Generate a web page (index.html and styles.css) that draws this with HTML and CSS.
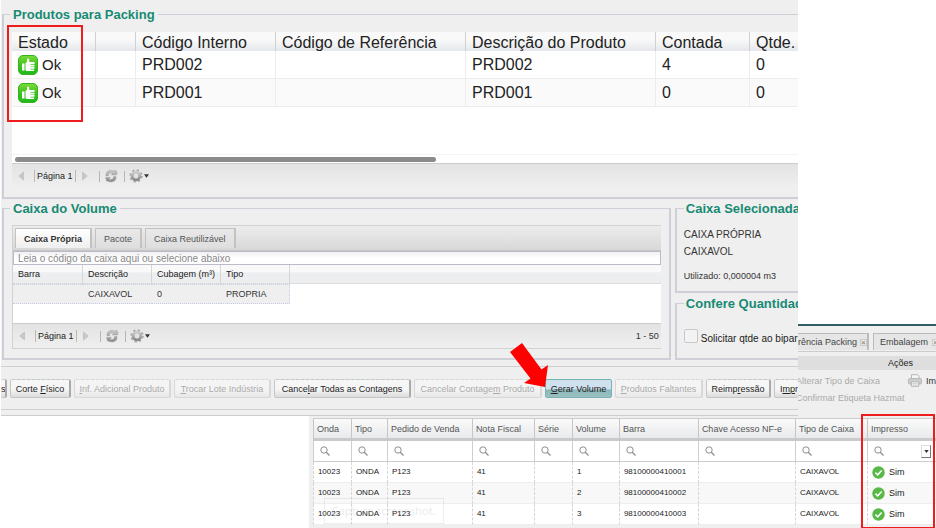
FILE: index.html
```html
<!DOCTYPE html>
<html lang="pt-BR">
<head>
<meta charset="utf-8">
<title>Packing</title>
<link rel="stylesheet" href="styles.css">
</head>
<body>
<svg class="defs" aria-hidden="true">
  <defs>
    <linearGradient id="okfill" x1="0" y1="0" x2="0" y2="1"><stop offset="0" stop-color="#7bdc3a"/><stop offset=".45" stop-color="#45c41f"/><stop offset="1" stop-color="#1fb81c"/></linearGradient>
    <linearGradient id="metal" x1="0" y1="0" x2="0" y2="1"><stop offset="0" stop-color="#cccccc"/><stop offset="1" stop-color="#8a8a8a"/></linearGradient>
  </defs>
  <symbol id="thumb" viewBox="0 0 20 20">
    <rect x=".5" y=".5" width="19" height="19" rx="4.5" fill="url(#okfill)" stroke="#35b51d"/>
    <path d="M4 8.500h2.500V15.500H4zM7.500 8.300L9 6.800V3.800h2.200V7h5.300v2h-4v.700h4v1.700h-4v.700h4v1.600h-4v.700h3.600v1.600H8.800l-1.300-.800z" fill="#fff"/>
  </symbol>
  <symbol id="refresh" viewBox="0 0 14 14">
    <path d="M2 7C1.300 3.500 4 1 7.500 1.400L11 2.200V.800l2.200 2.400L12.500 6H7.200l1.600-1.700C6 3.600 4.200 4.500 4.500 7zM12 7.500c.700 3.500-2 5.700-5.500 5.400L2.500 12l-1-3.500h5L5 10.200c2.700.700 4.600 0 4.500-2.700z" fill="url(#metal)" stroke="#999" stroke-width=".4"/>
  </symbol>
  <symbol id="gear" viewBox="0 0 14 14">
    <circle cx="7" cy="7" r="5.600" fill="none" stroke="#ababab" stroke-width="2.200" stroke-dasharray="2.200 2.200"/>
    <circle cx="7" cy="7" r="3.800" fill="none" stroke="url(#metal)" stroke-width="2.800"/>
    <circle cx="7" cy="7" r="2.200" fill="#e2e2e2"/>
  </symbol>
  <symbol id="prev" viewBox="0 0 6 10"><path d="M5.500 1v8L.8 5z" fill="#c9c9c9" stroke="#b5b5b5" stroke-width=".6"/></symbol>
  <symbol id="next" viewBox="0 0 6 10"><path d="M.5 1v8l4.700-4z" fill="#c9c9c9" stroke="#b5b5b5" stroke-width=".6"/></symbol>
  <symbol id="down" viewBox="0 0 6 4"><path d="M0 0h6L3 4z" fill="#333"/></symbol>
  <symbol id="search" viewBox="0 0 10 10"><circle cx="4" cy="4" r="3.200" fill="none" stroke="#8f8f8f"/><path d="M6.300 6.300l3.200 3.200" stroke="#8f8f8f" stroke-width="1.300"/></symbol>
  <symbol id="check" viewBox="0 0 14 14"><circle cx="7" cy="7" r="6.700" fill="#58b947"/><path d="M3.700 7.200l2.400 2.300 4.300-4.700" fill="none" stroke="#fff" stroke-width="1.700"/></symbol>
  <symbol id="printer" viewBox="0 0 14 13">
    <path d="M3.500 5V.7h6l1.500 1.500V5" fill="#f4f4f4" stroke="#b5b5b5"/><rect x=".6" y="4.600" width="12.800" height="5.400" rx="1" fill="#cecece" stroke="#b5b5b5"/><path d="M3.300 7.800h7.400v4.500H3.300z" fill="#f4f4f4" stroke="#b5b5b5"/><path d="M4.500 9.500h5M4.500 11h5" stroke="#c4c4c4" stroke-width=".7"/>
  </symbol>
</svg>

<main class="page">
  <div class="upper">
    <section class="packing">
      <fieldset class="group products">
        <legend>Produtos para Packing</legend>
        <div class="grid-box">
          <table class="product-table">
            <colgroup><col class="w84"><col class="w40"><col class="w140"><col class="w190"><col class="w190"><col class="w94"><col></colgroup>
            <thead><tr><th>Estado</th><th></th><th>Código Interno</th><th>Código de Referência</th><th>Descrição do Produto</th><th>Contada</th><th>Qtde.</th></tr></thead>
            <tbody>
              <tr><td><span class="state"><svg><use href="#thumb"/></svg>Ok</span></td><td></td><td>PRD002</td><td></td><td>PRD002</td><td>4</td><td>0</td></tr>
              <tr><td><span class="state"><svg><use href="#thumb"/></svg>Ok</span></td><td></td><td>PRD001</td><td></td><td>PRD001</td><td>0</td><td>0</td></tr>
            </tbody>
          </table>
          <div class="scroll"><div class="scroll-thumb"></div></div>
        </div>
        <div class="pager">
          <button class="icon-btn" aria-label="Anterior"><svg class="arrow"><use href="#prev"/></svg></button>
          <span class="page-no">Página 1</span>
          <button class="icon-btn" aria-label="Próxima"><svg class="arrow"><use href="#next"/></svg></button>
          <i class="sep"></i>
          <button class="icon-btn" aria-label="Atualizar"><svg class="tool"><use href="#refresh"/></svg></button>
          <i class="sep near"></i>
          <button class="icon-btn" aria-label="Opções"><svg class="tool"><use href="#gear"/></svg><svg class="caret"><use href="#down"/></svg></button>
        </div>
        <div class="mark mark-state"></div>
      </fieldset>

      <div class="columns">
        <fieldset class="group volume">
          <legend>Caixa do Volume</legend>
          <div class="box-panel">
            <div class="tabs">
              <button class="tab active">Caixa Própria</button>
              <button class="tab">Pacote</button>
              <button class="tab">Caixa Reutilizável</button>
            </div>
            <input class="code" type="text" aria-label="Código da caixa" placeholder="Leia o código da caixa aqui ou selecione abaixo">
            <div class="box-grid">
              <table class="box-table">
                <colgroup><col class="w70"><col class="w69"><col class="w69"><col class="w69"><col></colgroup>
                <thead><tr><th>Barra</th><th>Descrição</th><th>Cubagem (m³)</th><th>Tipo</th><th></th></tr></thead>
                <tbody><tr><td></td><td>CAIXAVOL</td><td>0</td><td>PROPRIA</td><td></td></tr></tbody>
              </table>
            </div>
            <div class="pager">
              <button class="icon-btn" aria-label="Anterior"><svg class="arrow"><use href="#prev"/></svg></button>
              <span class="page-no">Página 1</span>
              <button class="icon-btn" aria-label="Próxima"><svg class="arrow"><use href="#next"/></svg></button>
              <i class="sep"></i>
              <button class="icon-btn" aria-label="Atualizar"><svg class="tool"><use href="#refresh"/></svg></button>
              <i class="sep near"></i>
              <button class="icon-btn" aria-label="Opções"><svg class="tool"><use href="#gear"/></svg><svg class="caret"><use href="#down"/></svg></button>
              <span class="range">1 - 50</span>
            </div>
          </div>
        </fieldset>
        <div class="side">
          <fieldset class="group selected">
            <legend>Caixa Selecionada</legend>
            <p class="name">CAIXA PRÓPRIA</p>
            <p class="name">CAIXAVOL</p>
            <p class="used">Utilizado: 0,000004 m3</p>
          </fieldset>
          <fieldset class="group confirm">
            <legend>Confere Quantidad</legend>
            <label class="ask"><input type="checkbox"><span>Solicitar qtde ao bipar</span></label>
          </fieldset>
        </div>
      </div>

      <div class="actions">
        <button class="btn first">s</button>
        <button class="btn">Corte <u>F</u>ísico</button>
        <button class="btn" disabled><u>I</u>nf. Adicional Produto</button>
        <button class="btn" disabled><u>T</u>rocar Lote Indústria</button>
        <button class="btn">Cance<u>l</u>ar Todas as Contagens</button>
        <button class="btn" disabled>Cancelar Contage<u>m</u> Produto</button>
        <button class="btn primary"><u>G</u>erar Volume</button>
        <button class="btn" disabled><u>P</u>rodutos Faltantes</button>
        <button class="btn">Reimp<u>r</u>essão</button>
        <button class="btn last">I<u>mp</u>r</button>
        <svg class="pointer" viewBox="0 0 40 46" aria-hidden="true"><path d="M1 10L13 1l19.500 26.500L39 23l-3 22-21-4 6.500-4.500z" fill="#fe0000"/></svg>
      </div>
    </section>

    <section class="window">
      <div class="win-tabs">
        <button class="win-tab cut">rência Packing<span class="close">×</span></button>
        <button class="win-tab">Embalagem<span class="close">×</span></button>
      </div>
      <h2>Ações</h2>
      <div class="commands">
        <button class="cmd" disabled>Alterar Tipo de Caixa</button>
        <button class="cmd print"><svg><use href="#printer"/></svg>Im</button>
        <button class="cmd" disabled>Confirmar Etiqueta Hazmat</button>
      </div>
    </section>
  </div>

  <section class="volumes">
    <table class="volume-table">
      <colgroup><col class="c38"><col class="c36"><col class="c85"><col class="c62"><col class="c38"><col class="c47"><col class="c79"><col class="c97"><col class="c72"><col></colgroup>
      <thead>
        <tr><th>Onda</th><th>Tipo</th><th>Pedido de Venda</th><th>Nota Fiscal</th><th>Série</th><th>Volume</th><th>Barra</th><th>Chave Acesso NF-e</th><th>Tipo de Caixa</th><th>Impresso</th></tr>
        <tr class="filters">
          <td><label><svg><use href="#search"/></svg><input aria-label="Filtrar Onda"></label></td>
          <td><label><svg><use href="#search"/></svg><input aria-label="Filtrar Tipo"></label></td>
          <td><label><svg><use href="#search"/></svg><input aria-label="Filtrar Pedido de Venda"></label></td>
          <td><label><svg><use href="#search"/></svg><input aria-label="Filtrar Nota Fiscal"></label></td>
          <td><label><svg><use href="#search"/></svg><input aria-label="Filtrar Série"></label></td>
          <td><label><svg><use href="#search"/></svg><input aria-label="Filtrar Volume"></label></td>
          <td><label><svg><use href="#search"/></svg><input aria-label="Filtrar Barra"></label></td>
          <td><label><svg><use href="#search"/></svg><input aria-label="Filtrar Chave Acesso NF-e"></label></td>
          <td><label><svg><use href="#search"/></svg><input aria-label="Filtrar Tipo de Caixa"></label></td>
          <td><label><svg><use href="#search"/></svg><select aria-label="Filtrar Impresso"><option></option></select><span class="drop"><svg><use href="#down"/></svg></span></label></td>
        </tr>
      </thead>
      <tbody>
        <tr><td>10023</td><td>ONDA</td><td>P123</td><td>41</td><td></td><td>1</td><td>98100000410001</td><td></td><td>CAIXAVOL</td><td><span class="done"><svg><use href="#check"/></svg>Sim</span></td></tr>
        <tr><td>10023</td><td>ONDA</td><td>P123</td><td>41</td><td></td><td>2</td><td>98100000410002</td><td></td><td>CAIXAVOL</td><td><span class="done"><svg><use href="#check"/></svg>Sim</span></td></tr>
        <tr><td>10023</td><td>ONDA</td><td>P123</td><td>41</td><td></td><td>3</td><td>98100000410003</td><td></td><td>CAIXAVOL</td><td><span class="done"><svg><use href="#check"/></svg>Sim</span></td></tr>
      </tbody>
    </table>
    <div class="tip">Capture screenshot.</div>
    <div class="mark mark-printed"></div>
  </section>
</main>
</body>
</html>
```
FILE: styles.css
```css
* { box-sizing: border-box; }
body { margin: 0; background: #fff; color: #333; font: 9px/12px "Liberation Sans", Arial, sans-serif; overflow: hidden; }
button, input, select { font: inherit; color: inherit; margin: 0; padding: 0; }
button { border: 0; background: none; white-space: nowrap; }
table { border-collapse: separate; border-spacing: 0; table-layout: fixed; width: 100%; }
th, td { padding: 0 0 0 5px; text-align: left; font-weight: normal; white-space: nowrap; overflow: hidden; }
p, h2 { margin: 0; }
.defs { position: absolute; width: 0; height: 0; }

.upper { display: grid; grid-template-columns: minmax(0, 1fr) 138px; align-items: end; }
.packing { margin-left: 1px; padding: 7px 0 0 1px; background: #efefef; border-bottom: 1px solid #ccc; overflow: hidden; }

.group { position: relative; min-width: 0; margin: 0; padding: 10px 9px 10px; border: 2px solid #cfcfd8; border-top-width: 1px; }
.group legend { margin-left: -2px; padding: 0 3px; color: #178a74; font-size: 13px; line-height: 15px; font-weight: bold; white-space: nowrap; }
.products { padding: 10px 0 9px 8px; border-right: 0; }

.grid-box { background: #fff; border-bottom: 1px solid #ccc; }
.w84 { width: 84px; } .w40 { width: 40px; } .w140 { width: 140px; } .w190 { width: 190px; } .w94 { width: 94px; }
.w70 { width: 70px; } .w69 { width: 69px; }
.product-table { font-size: 16px; line-height: 20px; color: #222; }
.product-table th { height: 19px; padding-top: 3px; line-height: 16px; border-right: 1px solid #d0d0d0; background: linear-gradient(#f9f9f9 40%, #e4e7ea); }
.product-table td { height: 28px; border-right: 1px solid #ededed; border-bottom: 1px solid #ededed; }
.product-table th, .product-table td { padding-left: 6px; }
.product-table tr:nth-child(2) td { background: #fafafa; }
.product-table th:last-child, .product-table td:last-child { border-right: 0; }
.state { display: flex; align-items: center; gap: 4px; font-size: 15px; }
.state svg { width: 20px; height: 20px; }
.scroll { margin-top: 47px; height: 9px; padding: 3px; border-top: 1px solid #f4f4f4; }
.scroll-thumb { width: 54%; height: 5px; border-radius: 3px; background: #8b8b8b; margin-top: -1px; }

.pager { display: flex; align-items: center; height: 24px; padding: 0 2px 0 6px; background: linear-gradient(#e3e3e3, #efefef); }
.icon-btn { display: flex; align-items: center; gap: 1px; }
.arrow { width: 6px; height: 10px; }
.tool { width: 14px; height: 14px; }
.caret { width: 5px; height: 4px; }
.page-no { margin: 0 6px 0 10px; padding: 0 2px; border: solid #bdb9ae; border-width: 0 1px; color: #222; }
.sep { width: 1px; height: 11px; margin: 0 4px 0 11px; background: #b5b5b5; }
.sep.near { margin-left: 6px; }
.range { margin-left: auto; }

.columns { display: grid; grid-template-columns: minmax(0, 668fr) minmax(0, 123fr); gap: 4px; margin-top: 2px; }
.volume { padding: 9px 8px; }
.box-panel { border: 1px solid #d2d2d2; border-right: 0; }
.tabs { display: flex; align-items: flex-end; gap: 3px; height: 25px; padding: 0 2px 2px; background: linear-gradient(#ececec, #d8d8d8); border-bottom: 1px solid #c4c4c4; }
.tab { height: 20px; padding: 0 8px; border: 1px solid #c2c2c2; border-width: 1px 2px 0 1px; background: linear-gradient(#e9e9e9, #dedede); color: #555; }
.tab.active { background: linear-gradient(#fff, #efefef); color: #333; font-weight: bold; }
.code { display: block; width: 100%; height: 14px; padding: 0 4px; border: 1px solid #bcbcc9; background: linear-gradient(#f0f0f0, #fff 50%); font-size: 10px; }
.code::placeholder { color: #888; opacity: 1; }
.box-grid { height: 59px; background: #fff; border-bottom: 1px solid #ccc; }
.box-table th { height: 19px; border-right: 1px solid #d6d6d6; border-bottom: 1px solid #ddd; background: linear-gradient(#f9f9f9 35%, #eceef0 45%, #eceef0); color: #222; }
.box-table th:last-child { border-right: 0; }
.box-table td { height: 20px; border: dotted #c3cce4; border-width: 1px 0; background: #efefef; }
.box-table td:nth-child(4) { border-right-width: 1px; }
.box-table td:last-child { border: 0; background: #fff; }

.side { display: grid; grid-template-rows: 92px 1fr; gap: 3px; min-width: 0; }
.side .group { border-right: 0; padding: 10px 0 0 7px; }
.side legend { margin-left: 0; padding-left: 2px; }
.name { line-height: 17px; font-size: 10px; }
.used { margin-top: 10px; white-space: nowrap; }
.side .confirm { padding-top: 18px; }
.ask { display: flex; gap: 3px; white-space: nowrap; font-size: 10px; line-height: 19px; color: #222; }
.ask input { appearance: none; flex: none; width: 14px; height: 14px; border: 1px solid #c8c8c8; border-radius: 2px; background: #f3f3f3; }

.actions { position: relative; display: grid; grid-template-columns: 6px minmax(0, 61fr) minmax(0, 97fr) minmax(0, 97fr) minmax(0, 137fr) minmax(0, 128fr) minmax(0, 67fr) minmax(0, 88fr) minmax(0, 65fr) minmax(0, 24fr); gap: 3px; margin: 6px 0 5px -1px; padding: 12px 0 11px; border: solid #cfcfcf; border-width: 1px 0; }
.btn { height: 19px; overflow: hidden; border: 1px solid #c6c6c6; border-top: 1px dashed #bdc9c9; border-right: 2px solid #aaa; border-radius: 2px; background: linear-gradient(#f6f6f6 55%, #dcdcdc); color: #222; }
.btn:disabled { border-color: #d8d8d8; background: linear-gradient(#f4f4f4 55%, #e8e8e8); color: #aaa; }
.btn.primary { border: 1px solid #76b3b5; background: linear-gradient(#cfe0ee 50%, #8bb7b9 60%, #9cc0c1); }
.btn.first { border-left: 0; text-align: left; }
.btn.last { border-right: 0; padding-left: 5px; text-align: left; }
.pointer { position: absolute; left: 508px; top: -25px; width: 40px; height: 46px; }

.window { height: 92px; overflow: hidden; border-top: 2px solid #2e5f63; background: #efefef; }
.win-tabs { display: flex; gap: 4px; height: 26px; margin-bottom: 4px; padding-top: 7px; border-bottom: 1px solid #ccc; }
.win-tab { display: flex; flex: none; align-items: center; gap: 4px; height: 17px; padding: 0 2px 0 6px; border: 1px solid #bbb; border-width: 1px 2px 0 1px; background: #e6e6e6; color: #444; }
.win-tab.cut { padding-left: 0; border-left: 0; width: 71px; gap: 3px; }
.close { width: 7px; height: 7px; border: 1px solid #ccc; font-size: 8px; line-height: 5px; color: #777; }
.window h2 { padding-left: 67px; height: 14px; background: #dedede; font-size: 9px; line-height: 14px; font-weight: normal; text-align: center; color: #222; }
.commands { display: grid; grid-template-columns: 112px 1fr; align-items: center; grid-auto-rows: 17px; padding-top: 2px; }
.cmd { display: flex; align-items: center; gap: 4px; margin-left: -2px; }
.cmd:disabled { color: #aaa; }
.print svg { width: 14px; height: 13px; flex: none; }

.volumes { position: relative; margin-left: 33%; padding: 2px 0 4px 4px; background: #efefef; }
.volume-table { background: #fff; }
.c38 { width: 38px; } .c36 { width: 36px; } .c85 { width: 85px; } .c62 { width: 62px; } .c47 { width: 47px; } .c79 { width: 79px; } .c97 { width: 97px; } .c72 { width: 72px; }
.volume-table th { height: 23px; padding-left: 3px; border-left: 1px solid #c6c6c6; border-top: 1px solid #ccc; border-bottom: 3px solid #cacaca; background: linear-gradient(#fafafa, #e9eaec); color: #555; }
.volume-table .filters td { height: 21px; padding-left: 6px; border-left: 1px solid #cfcfcf; border-bottom: 1px solid #ccc; }
.filters label { display: flex; align-items: center; }
.filters svg { flex: none; width: 10px; height: 10px; }
.filters input, .filters select { appearance: none; min-width: 0; width: 100%; height: 14px; border: 0; background: none; }
.drop { display: flex; flex: none; align-items: center; justify-content: center; width: 10px; height: 13px; margin-right: 5px; border: 1px solid #ddd; border-right-color: #777; border-bottom-color: #777; }
.drop .svg, .drop svg { width: 5px; height: 3px; }
.volume-table tbody td { height: 21px; padding-left: 4px; font-size: 8px; border-left: 1px dashed #d5d5d5; border-bottom: 1px solid #eee; color: #222; }
.volume-table tbody tr:nth-child(2) td { background: #f8f8f8; }
.done { display: flex; align-items: center; gap: 4px; font-size: 9px; }
.done svg { width: 13px; height: 13px; }
.tip { position: absolute; left: 15px; top: 82px; height: 26px; padding: 0 7px; border: 1px solid #999; color: #888; font: 11px/24px "Noto Sans", sans-serif; opacity: .16; }

.mark { position: absolute; border: 2px solid #ee1c1c; pointer-events: none; }
.mark-state { left: 3px; top: 3px; width: 76px; height: 97px; }
.mark-printed { right: 1px; top: -2px; width: 74px; height: 115px; }
```
